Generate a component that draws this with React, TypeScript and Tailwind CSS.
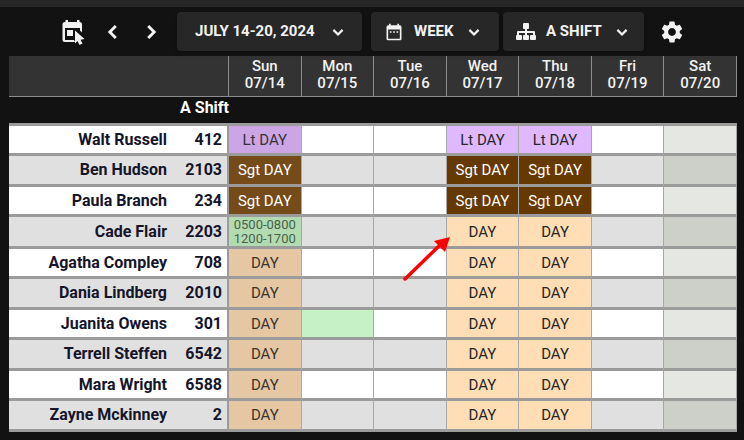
import { useState } from 'react';
import { MdDateRange, MdSettings } from 'react-icons/md';

type Shift = { label: string; tone: keyof typeof tones };

type Member = {
  name: string;
  badge: string;
  shifts: Record<number, Shift>;
};

const tones = {
  lieutenant: { plain: 'bg-[#e0b8ff] text-[#262626]', past: 'bg-[#cca5e5] text-[#363039]' },
  sergeant: { plain: 'bg-[#663900] text-white', past: 'bg-[#754c19] text-white' },
  day: { plain: 'bg-[#ffdeb5] text-[#262626]', past: 'bg-[#e5c7a3] text-[#39342e]' },
  split: { plain: 'bg-[#c6f0c6] text-[#262626]', past: 'bg-[#b2dbb2] text-[#4a5f4a]' },
  open: { plain: 'bg-[#c6f0c6]', past: 'bg-[#b2dbb2]' },
};

const days = [
  ['Sun', '07/14'],
  ['Mon', '07/15'],
  ['Tue', '07/16'],
  ['Wed', '07/17'],
  ['Thu', '07/18'],
  ['Fri', '07/19'],
  ['Sat', '07/20'],
];

const lt: Shift = { label: 'Lt DAY', tone: 'lieutenant' };
const sgt: Shift = { label: 'Sgt DAY', tone: 'sergeant' };
const day: Shift = { label: 'DAY', tone: 'day' };
const split: Shift = { label: '0500-0800 1200-1700', tone: 'split' };
const open: Shift = { label: '', tone: 'open' };

const members: Member[] = [
  { name: 'Walt Russell', badge: '412', shifts: { 0: lt, 3: lt, 4: lt } },
  { name: 'Ben Hudson', badge: '2103', shifts: { 0: sgt, 3: sgt, 4: sgt } },
  { name: 'Paula Branch', badge: '234', shifts: { 0: sgt, 3: sgt, 4: sgt } },
  { name: 'Cade Flair', badge: '2203', shifts: { 0: split, 3: day, 4: day } },
  { name: 'Agatha Compley', badge: '708', shifts: { 0: day, 3: day, 4: day } },
  { name: 'Dania Lindberg', badge: '2010', shifts: { 0: day, 3: day, 4: day } },
  { name: 'Juanita Owens', badge: '301', shifts: { 0: day, 1: open, 3: day, 4: day } },
  { name: 'Terrell Steffen', badge: '6542', shifts: { 0: day, 3: day, 4: day } },
  { name: 'Mara Wright', badge: '6588', shifts: { 0: day, 3: day, 4: day } },
  { name: 'Zayne Mckinney', badge: '2', shifts: { 0: day, 3: day, 4: day } },
];

function CalendarCursorIcon() {
  return (
    <svg viewBox="0 0 24 26" className="h-[26px] w-6" aria-hidden="true">
      <path
        fill="currentColor"
        d="M4.500 1h2.500v2h9V1h2.500v2a2.500 2.500 0 0 1 2.500 2.500v8l-2-2V9H4v12h9l1 2H4a2.500 2.500 0 0 1-2.500-2.500v-15A2.500 2.500 0 0 1 4 3h.5z"
      />
      <path fill="currentColor" d="M6 11h6v6H6z" />
      <path fill="currentColor" d="M14 11.500 23.500 20l-4 .8 2 3.700-3 1.500-2-4-2.500 2.500z" />
    </svg>
  );
}

function OrgChartIcon() {
  return (
    <svg viewBox="0 0 20 20" className="h-5 w-5" aria-hidden="true" fill="currentColor">
      <rect x="7" y="1" width="6" height="6" rx="1" />
      <path d="M9 7h2v2h7a1 1 0 0 1 1 1v4h-2v-3h-6v3H9v-3H3v3H1v-4a1 1 0 0 1 1-1h7z" />
      <rect x="0" y="13" width="6" height="5" rx="1" />
      <rect x="7" y="13" width="6" height="5" rx="1" />
      <rect x="14" y="13" width="6" height="5" rx="1" />
    </svg>
  );
}

const chevrons = {
  left: 'M15.500 6.500 10 12l5.500 5.500',
  right: 'M8.500 6.500 14 12l-5.500 5.500',
  down: 'm6.500 9.500 5.500 5.500 5.500-5.500',
};

function Chevron({ to, size }: { to: keyof typeof chevrons; size: number }) {
  return (
    <svg
      viewBox="0 0 24 24"
      width={size}
      height={size}
      fill="none"
      stroke="currentColor"
      strokeWidth="2.700"
      aria-hidden="true"
    >
      <path d={chevrons[to]} />
    </svg>
  );
}

function Toolbar() {
  const menuButton =
    'flex h-[39px] items-center rounded bg-[#272727] text-[15px] font-bold whitespace-nowrap shadow-md';
  return (
    <div className="flex items-center pt-[5px] pb-[5px] pl-[61px] text-[#f2f2f2]">
      <button type="button" aria-label="Today" className="mr-[14px]">
        <CalendarCursorIcon />
      </button>
      <button type="button" aria-label="Previous week" className="mr-[14px]">
        <Chevron to="left" size={26} />
      </button>
      <button type="button" aria-label="Next week" className="mr-3">
        <Chevron to="right" size={26} />
      </button>
      <button type="button" className={`${menuButton} mr-[9px] w-[185px] justify-between pr-[14px] pl-[18px]`}>
        JULY 14-20, 2024
        <Chevron to="down" size={20} />
      </button>
      <button type="button" className={`${menuButton} mr-1 w-[128px] gap-[10px] pl-[13px]`}>
        <MdDateRange size={20} />
        WEEK
        <Chevron to="down" size={20} />
      </button>
      <button type="button" className={`${menuButton} mr-[15px] w-[141px] gap-[10px] pl-[13px]`}>
        <OrgChartIcon />
        A SHIFT
        <Chevron to="down" size={20} />
      </button>
      <button type="button" aria-label="Settings">
        <MdSettings size={26} />
      </button>
    </div>
  );
}

function DayCell({ index, shift, striped }: { index: number; shift?: Shift; striped: boolean }) {
  let tone = striped ? 'bg-[#e0e0e0]' : 'bg-white';
  if (index === 6) tone = striped ? 'bg-[#cdcfc9]' : 'bg-[#e5e8e2]';
  if (shift) tone = index === 0 ? tones[shift.tone].past : tones[shift.tone].plain;
  const text = shift?.tone === 'split' ? 'text-[13px] leading-[14px]' : 'text-[15px] leading-5';
  return (
    <td className={`border-r border-b-3 border-r-[#a8a8a8] border-b-[#9b9b9b] p-0 text-center ${text} ${tone}`}>
      {shift?.label}
    </td>
  );
}

export default function App() {
  const [roster] = useState(members);
  return (
    <div className="min-h-screen bg-[#121212] font-['Roboto','Liberation_Sans',sans-serif]">
      <div className="h-[7px] bg-[#262626]" />
      <Toolbar />
      <div className="pr-[7px] pb-2 pl-[9px]">
        <table className="w-full table-fixed border-separate border-spacing-0">
          <colgroup>
            <col className="w-[162px]" />
            <col className="w-[58px]" />
            {days.map(([name]) => (
              <col key={name} />
            ))}
          </colgroup>
          <thead>
            <tr className="h-[41px] bg-[#333] text-[15px] leading-[17px] text-[#f2f2f2]">
              <td colSpan={2} className="border-r border-b border-[#8c8c8c]" />
              {days.map(([name, date]) => (
                <th
                  key={name}
                  scope="col"
                  className="border-r border-b border-[#8c8c8c] p-0 pb-[2px] font-medium"
                >
                  {name}
                  <br />
                  {date}
                </th>
              ))}
            </tr>
            <tr className="h-[29px]">
              <th
                colSpan={2}
                scope="rowgroup"
                className="border-b-3 border-[#9b9b9b] p-0 pb-1 text-right text-base leading-5 font-bold text-white"
              >
                A Shift
              </th>
              <td colSpan={7} className="border-b-3 border-[#9b9b9b]" />
            </tr>
          </thead>
          <tbody>
            {roster.map((member, row) => {
              const striped = row % 2 === 1;
              const height = member.shifts[0] === split ? 'h-8' : striped ? 'h-[31px]' : 'h-[30px]';
              return (
                <tr key={member.name} className={`${height} ${striped ? 'bg-[#e0e0e0]' : 'bg-white'} text-[#15152a]`}>
                  <th
                    scope="row"
                    className="border-b-3 border-[#9b9b9b] p-0 pr-1 text-right text-base leading-5 font-bold"
                  >
                    {member.name}
                  </th>
                  <td className="border-r-2 border-b-3 border-[#9b9b9b] p-0 pr-[5px] text-right text-base leading-5 font-bold">
                    {member.badge}
                  </td>
                  {days.map(([name], i) => (
                    <DayCell key={name} index={i} shift={member.shifts[i]} striped={striped} />
                  ))}
                </tr>
              );
            })}
          </tbody>
        </table>
      </div>
      <svg
        viewBox="0 0 48 46"
        className="pointer-events-none absolute top-[236px] left-[403px] h-[46px] w-12"
        aria-hidden="true"
      >
        <path d="M2 43 36 10" stroke="#f00" strokeWidth="3.500" strokeLinecap="round" />
        <path d="M47 1 42 16 31 5z" fill="#f00" />
      </svg>
    </div>
  );
}
